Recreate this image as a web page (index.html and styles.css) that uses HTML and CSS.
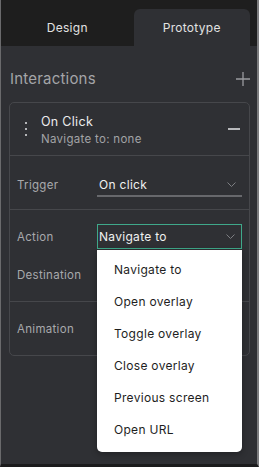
FILE: index.html
```html
<!DOCTYPE html>
<html>
<head>
    <title>Prototype</title>
    <link rel="stylesheet" href="styles.css">
</head>
<body>
    <div class="app">
        <div class="tabs">
            <div class="tab">Design</div>
            <div class="tab active">Prototype</div>
        </div>

        <div class="section-head">
            <span>Interactions</span>
            <svg class="plus" width="14" height="14" viewBox="0 0 14 14">
                <path d="M7 0v14M0 7h14" stroke="#9a9b9f" stroke-width="1.3" fill="none"/>
            </svg>
        </div>

        <div class="card">
            <div class="card-head">
                <div class="dots"><i></i><i></i><i></i></div>
                <div class="card-title">
                    <div class="title">On Click</div>
                    <div class="subtitle">Navigate to: none</div>
                </div>
                <div class="minus"></div>
            </div>

            <div class="group trigger">
                <div class="row">
                    <div class="label">Trigger</div>
                    <div class="select">
                        <span>On click</span>
                        <svg class="chev" width="9" height="5" viewBox="0 0 9 5"><path d="M0.5 0.5l4 4 4-4" stroke="#7d7e82" fill="none"/></svg>
                    </div>
                </div>
            </div>

            <div class="group action">
                <div class="row">
                    <div class="label">Action</div>
                    <div class="select open">
                        <span>Navigate to</span>
                        <svg class="chev" width="9" height="5" viewBox="0 0 9 5"><path d="M0.5 0.5l4 4 4-4" stroke="#7d7e82" fill="none"/></svg>
                        <div class="menu">
                            <div class="menu-item">Navigate to</div>
                            <div class="menu-item">Open overlay</div>
                            <div class="menu-item">Toggle overlay</div>
                            <div class="menu-item">Close overlay</div>
                            <div class="menu-item">Previous screen</div>
                            <div class="menu-item">Open URL</div>
                        </div>
                    </div>
                </div>
                <div class="row second">
                    <div class="label">Destination</div>
                </div>
            </div>

            <div class="group animation">
                <div class="row">
                    <div class="label">Animation</div>
                </div>
            </div>
        </div>
    </div>
</body>
</html>
```

FILE: styles.css
```css
body {
    margin: 0;
    padding: 0;
    font-family: Inter, "Noto Sans", sans-serif;
    background-color: #1b1b1c;
}
.app {
    width: 256px;
    height: 464px;
    background-color: #2f3034;
    border-left: 1px solid #6a6a6c;
    border-right: 2px solid #7c7c7e;
    border-bottom: 3px solid #1b1b1c;
}
.tabs {
    height: 37px;
    padding: 9px 7px 0 8px;
    background-color: #1e1e1e;
    display: flex;
    gap: 8px;
}
.tab {
    flex: 1;
    text-align: center;
    line-height: 37px;
    font-size: 12px;
    letter-spacing: 0.3px;
    color: #e2e2e2;
}
.tab.active {
    background-color: #2f3034;
    border-radius: 6px 6px 0 0;
}
.section-head {
    height: 33px;
    padding: 23px 7px 0 9px;
    display: flex;
    justify-content: space-between;
    align-items: flex-start;
    font-size: 15px;
    letter-spacing: 0.2px;
    color: #a4a5a8;
}
.plus {
    margin-top: 3px;
}
.card {
    margin: 0 7px 0 8px;
    border: 1px solid #46474b;
    border-radius: 5px;
}
.card-head {
    height: 52px;
    display: flex;
    align-items: center;
    border-bottom: 1px solid #46474b;
}
.dots {
    width: 31px;
    display: flex;
    flex-direction: column;
    align-items: center;
    gap: 4px;
}
.dots i {
    width: 2px;
    height: 2px;
    background-color: #b4b5b8;
}
.card-title {
    flex: 1;
    padding-top: 2px;
}
.title {
    font-size: 12.5px;
    color: #ececec;
    letter-spacing: 0.3px;
}
.subtitle {
    margin-top: 3px;
    font-size: 11.5px;
    color: #a2a3a6;
    letter-spacing: 0.3px;
}
.minus {
    width: 12px;
    height: 2px;
    margin-right: 9px;
    background-color: #b8b9bc;
}
.group {
    padding: 0 7px;
    border-bottom: 1px solid #46474b;
}
.group.trigger {
    padding-top: 17px;
    padding-bottom: 12px;
}
.group.action {
    padding-top: 14px;
    padding-bottom: 15px;
}
.group.animation {
    padding-top: 15px;
    padding-bottom: 15px;
    border-bottom: none;
}
.row {
    display: flex;
    align-items: center;
    min-height: 23px;
}
.row.second {
    margin-top: 14px;
}
.label {
    width: 80px;
    font-size: 11.5px;
    letter-spacing: 0.3px;
    color: #a8a9ac;
}
.select {
    position: relative;
    flex: 1;
    height: 22px;
    padding: 0 6px 0 2px;
    display: flex;
    justify-content: space-between;
    align-items: center;
    border-bottom: 2px solid #67686c;
    font-size: 12px;
    letter-spacing: 0.3px;
    color: #f0f0f0;
}
.select.open {
    height: 23px;
    padding-left: 1px;
    border: 1px solid #3fa88a;
}
.menu {
    position: absolute;
    top: 25px;
    left: -1px;
    width: 145px;
    padding: 4px 0 6px 0;
    background-color: #ffffff;
    border-radius: 0 0 5px 5px;
    box-shadow: 0 2px 6px rgba(0,0,0,0.3);
    z-index: 1;
}
.menu-item {
    height: 32px;
    line-height: 32px;
    padding-left: 17px;
    font-size: 12px;
    letter-spacing: 0.3px;
    color: #1e1e1e;
}
```
